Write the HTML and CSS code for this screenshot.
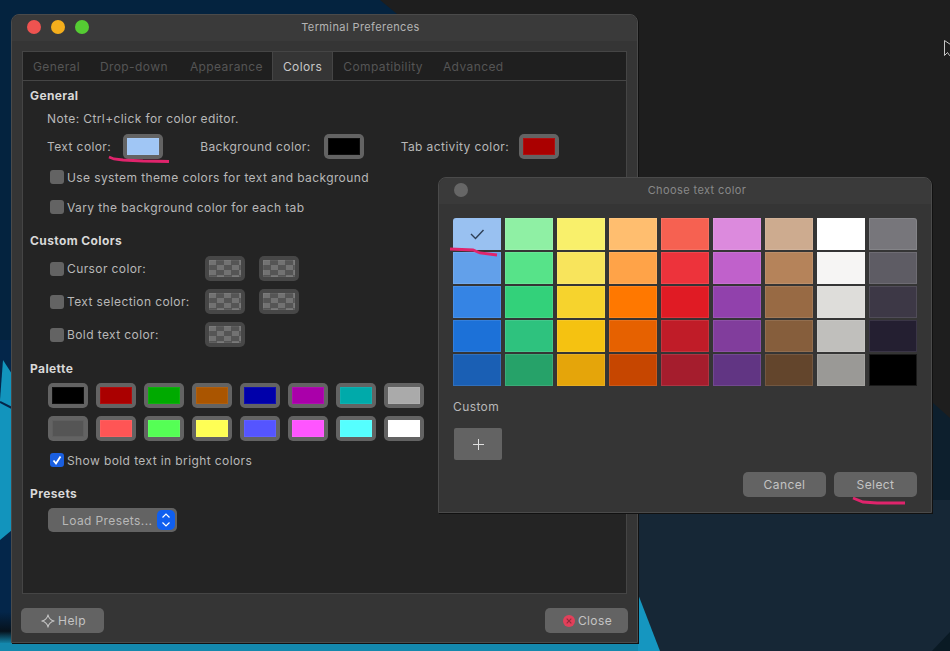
FILE: index.html
```html
<!DOCTYPE html>
<html lang="en">
<head>
  <meta charset="UTF-8">
  <title>Terminal Preferences</title>
  <link rel="stylesheet" href="styles.css">
</head>
<body>

  <svg class="wallpaper" width="950" height="651" viewBox="0 0 950 651">
    <defs>
      <linearGradient id="shade" x1="0" y1="0" x2="0" y2="1">
        <stop offset="0" stop-color="#04264a"/>
        <stop offset="0.6" stop-color="#06121c"/>
        <stop offset="1" stop-color="#1488ad"/>
      </linearGradient>
    </defs>
    <rect width="950" height="651" fill="#1e1e1e"/>
    <polygon points="0,0 380,0 397,14 440,60 440,400 0,400" fill="#04233f"/>
    <rect x="0" y="340" width="12" height="311" fill="#04264a"/>
    <polygon points="3,360 12,374 12,530 0,540 0,400" fill="#1294bd"/>
    <path d="M0 402l12 6" stroke="#04264a" stroke-width="2"/>
    <rect x="0" y="612" width="12" height="32" fill="url(#shade)"/>
    <polygon points="932,402 950,418 950,520 932,520" fill="#0d1f2d"/>
    <polygon points="600,500 950,500 950,651 660,651 638,595" fill="#162736"/>
    <rect x="0" y="643" width="640" height="8" fill="#1488ad"/>
    <polygon points="638,594 660,651 638,651" fill="#1596c0"/>
    <polygon points="932,651 950,632 950,651" fill="#0a1a24"/>
    <path d="M944.500 40.500v15l3-3 2 3h1v-11z" fill="#1e1e1e" stroke="#c8c8c8"/>
  </svg>

  <div class="window prefs">
    <div class="titlebar">
      <div class="lights">
        <span class="light red"></span>
        <span class="light yellow"></span>
        <span class="light green"></span>
      </div>
      <div class="title">Terminal Preferences</div>
    </div>

    <div class="notebook">
      <div class="tabs">
        <div class="tab">General</div>
        <div class="tab">Drop-down</div>
        <div class="tab">Appearance</div>
        <div class="tab active">Colors</div>
        <div class="tab">Compatibility</div>
        <div class="tab">Advanced</div>
      </div>

      <div class="page">
        <h3>General</h3>
        <div class="indent">
          <p class="note">Note: Ctrl+click for color editor.</p>
          <div class="general-row">
            <span class="general-label">Text color:</span>
            <span class="swatch"><i style="background:#a0c6f5"></i></span>
            <span class="general-label bg-label">Background color:</span>
            <span class="swatch"><i style="background:#000"></i></span>
            <span class="general-label tab-label">Tab activity color:</span>
            <span class="swatch"><i style="background:#aa0000"></i></span>
          </div>
          <label class="check first"><span class="box"></span>Use system theme colors for text and background</label>
          <label class="check"><span class="box"></span>Vary the background color for each tab</label>
        </div>

        <h3 class="custom-head">Custom Colors</h3>
        <div class="indent custom-grid">
          <label class="check"><span class="box"></span>Cursor color:</label>
          <span class="swatch empty"><i></i></span>
          <span class="swatch empty"><i></i></span>
          <label class="check"><span class="box"></span>Text selection color:</label>
          <span class="swatch empty"><i></i></span>
          <span class="swatch empty"><i></i></span>
          <label class="check"><span class="box"></span>Bold text color:</label>
          <span class="swatch empty"><i></i></span>
        </div>

        <h3 class="palette-head">Palette</h3>
        <div class="indent">
          <div class="palette">
            <span class="swatch"><i style="background:#000"></i></span>
            <span class="swatch"><i style="background:#aa0000"></i></span>
            <span class="swatch"><i style="background:#00aa00"></i></span>
            <span class="swatch"><i style="background:#aa5500"></i></span>
            <span class="swatch"><i style="background:#0000aa"></i></span>
            <span class="swatch"><i style="background:#aa00aa"></i></span>
            <span class="swatch"><i style="background:#00aaaa"></i></span>
            <span class="swatch"><i style="background:#aaaaaa"></i></span>
            <span class="swatch"><i style="background:#555555"></i></span>
            <span class="swatch"><i style="background:#ff5555"></i></span>
            <span class="swatch"><i style="background:#55ff55"></i></span>
            <span class="swatch"><i style="background:#ffff55"></i></span>
            <span class="swatch"><i style="background:#5555ff"></i></span>
            <span class="swatch"><i style="background:#ff55ff"></i></span>
            <span class="swatch"><i style="background:#55ffff"></i></span>
            <span class="swatch"><i style="background:#ffffff"></i></span>
          </div>
          <label class="check bold-check">
            <span class="box on">
              <svg width="14" height="14" viewBox="0 0 14 14"><path d="M3.500 7.500l2.500 3 4.500-7" fill="none" stroke="#fff" stroke-width="1.800"/></svg>
            </span>Show bold text in bright colors
          </label>
        </div>

        <h3 class="presets-head">Presets</h3>
        <div class="indent">
          <div class="combo">
            <span class="combo-text">Load Presets...</span>
            <span class="combo-arrows">
              <svg width="10" height="16" viewBox="0 0 10 16"><path d="M1.500 5.500l3.500-3.500 3.500 3.500M1.500 10.500l3.500 3.500 3.500-3.500" fill="none" stroke="#fff" stroke-width="1.200"/></svg>
            </span>
          </div>
        </div>
      </div>
    </div>

    <div class="actions">
      <button class="btn">
        <svg width="14" height="14" viewBox="0 0 16 16"><path d="M8 1c.8 3.800 3.200 6.200 7 7-3.800.8-6.200 3.200-7 7-.8-3.800-3.200-6.200-7-7 3.800-.8 6.200-3.200 7-7z" fill="none" stroke="#c4c4c4" stroke-width="1.200" stroke-linejoin="round"/></svg>
        Help
      </button>
      <button class="btn">
        <svg width="12" height="12" viewBox="0 0 13 13"><circle cx="6.500" cy="6.500" r="6.500" fill="#e2405a"/><path d="M4 4l5 5M9 4l-5 5" stroke="#8f2a3d" stroke-width="1.200"/></svg>
        Close
      </button>
    </div>
  </div>

  <div class="window chooser">
    <div class="titlebar">
      <div class="lights"><span class="light gray"></span></div>
      <div class="title dim">Choose text color</div>
    </div>
    <div class="chooser-body">
      <div class="colors">
        <span class="color selected" style="background:#99c1f1">
          <svg width="16" height="12" viewBox="0 0 16 12"><path d="M2 6l4.500 4.500 8-8.500" fill="none" stroke="#2e3f55" stroke-width="1.400"/></svg>
        </span>
        <span class="color" style="background:#8ff0a4"></span>
        <span class="color" style="background:#f9f06b"></span>
        <span class="color" style="background:#ffbe6f"></span>
        <span class="color" style="background:#f66151"></span>
        <span class="color" style="background:#dc8add"></span>
        <span class="color" style="background:#cdab8f"></span>
        <span class="color" style="background:#ffffff"></span>
        <span class="color" style="background:#77767b"></span>

        <span class="color" style="background:#62a0ea"></span>
        <span class="color" style="background:#57e389"></span>
        <span class="color" style="background:#f8e45c"></span>
        <span class="color" style="background:#ffa348"></span>
        <span class="color" style="background:#ed333b"></span>
        <span class="color" style="background:#c061cb"></span>
        <span class="color" style="background:#b5835a"></span>
        <span class="color" style="background:#f6f5f4"></span>
        <span class="color" style="background:#5e5c64"></span>

        <span class="color" style="background:#3584e4"></span>
        <span class="color" style="background:#33d17a"></span>
        <span class="color" style="background:#f6d32d"></span>
        <span class="color" style="background:#ff7800"></span>
        <span class="color" style="background:#e01b24"></span>
        <span class="color" style="background:#9141ac"></span>
        <span class="color" style="background:#986a44"></span>
        <span class="color" style="background:#deddda"></span>
        <span class="color" style="background:#3d3846"></span>

        <span class="color" style="background:#1c71d8"></span>
        <span class="color" style="background:#2ec27e"></span>
        <span class="color" style="background:#f5c211"></span>
        <span class="color" style="background:#e66100"></span>
        <span class="color" style="background:#c01c28"></span>
        <span class="color" style="background:#813d9c"></span>
        <span class="color" style="background:#865e3c"></span>
        <span class="color" style="background:#c0bfbc"></span>
        <span class="color" style="background:#241f31"></span>

        <span class="color" style="background:#1a5fb4"></span>
        <span class="color" style="background:#26a269"></span>
        <span class="color" style="background:#e5a50a"></span>
        <span class="color" style="background:#c64600"></span>
        <span class="color" style="background:#a51d2d"></span>
        <span class="color" style="background:#613583"></span>
        <span class="color" style="background:#63452c"></span>
        <span class="color" style="background:#9a9996"></span>
        <span class="color" style="background:#000000"></span>
      </div>
      <div class="custom-label">Custom</div>
      <button class="add">
        <svg width="13" height="13" viewBox="0 0 13 13"><path d="M6.500 1v11M1 6.500h11" stroke="#e0e0e0" stroke-width="1"/></svg>
      </button>
      <div class="chooser-actions">
        <button class="btn">Cancel</button>
        <button class="btn">Select</button>
      </div>
    </div>
  </div>

  <!-- marker scribbles drawn over the screenshot -->
  <svg class="scribbles" width="950" height="651" viewBox="0 0 950 651">
    <g fill="none" stroke="#e0246c" stroke-width="2.800">
      <path d="M109 157l5 2 9 1 20 1 26 .5"/>
      <path d="M450 249l23 1 7 3 17 2"/>
      <path d="M853 498l10 4 14 1 28 0"/>
    </g>
  </svg>

</body>
</html>
```

FILE: styles.css
```css
* {
  box-sizing: border-box;
}
body {
  margin: 0;
  width: 950px;
  height: 651px;
  overflow: hidden;
  position: relative;
  background-color: #1e1e1e;
  font-family: Inter, "Noto Sans", sans-serif;
  font-size: 12px;
  letter-spacing: 0.4px;
  color: #b8b8b8;
}
.wallpaper, .scribbles {
  position: absolute;
  left: 0;
  top: 0;
}
.scribbles {
  pointer-events: none;
}

/* windows */
.window {
  position: absolute;
  display: flex;
  flex-direction: column;
  background-color: #353535;
  border: 1px solid #4a4a4a;
  border-radius: 8px 8px 0 0;
  box-shadow: 1px 1px 0 #111;
}
.prefs {
  left: 11px;
  top: 14px;
  width: 627px;
  height: 629px;
}
.chooser {
  left: 438px;
  top: 177px;
  width: 494px;
  height: 336px;
}
.titlebar {
  height: 26px;
  padding-bottom: 2px;
  display: flex;
  align-items: center;
  position: relative;
  background-color: #3a3a3a;
  border-radius: 8px 8px 0 0;
}
.lights {
  display: flex;
  gap: 10px;
  padding-left: 15px;
}
.light {
  width: 14px;
  height: 14px;
  border-radius: 50%;
}
.red { background-color: #ee5350; }
.yellow { background-color: #f4ae1c; }
.green { background-color: #55cc33; }
.gray { background-color: #666; }
.title {
  position: absolute;
  left: 0;
  right: 0;
  padding-left: 72px;
  text-align: center;
  font-size: 11px;
  color: #b4b4b4;
}
.title.dim {
  padding-left: 24px;
  color: #888;
}

/* preferences */
.notebook {
  margin: 10px 10px 0;
  height: 543px;
  background-color: #242424;
  border: 1px solid #454545;
}
.tabs {
  display: flex;
  height: 29px;
  background-color: #1f1f1f;
  border-bottom: 1px solid #454545;
}
.tab {
  display: flex;
  align-items: center;
  padding: 0 10px;
  color: #555;
}
.tab:nth-child(3) {
  padding: 0 9px 0 12px;
}
.tab.active {
  background-color: #353535;
  border-left: 1px solid #454545;
  border-right: 1px solid #454545;
  color: #c8c8c8;
}
.page {
  padding: 7px 7px;
}
h3 {
  margin: 0;
  font-size: 12px;
  line-height: 15px;
  font-weight: 700;
  color: #d8d8d8;
}
.indent {
  padding-left: 17px;
}
.note {
  margin: 0;
  padding-top: 8px;
  line-height: 15px;
}
.general-row {
  display: flex;
  align-items: center;
  margin-top: 8px;
}
.general-label {
  line-height: 25px;
}
.general-row .swatch {
  margin-left: 13px;
}
.general-row .swatch:nth-child(2) {
  margin-left: 12px;
}
.general-row .tab-label + .swatch {
  margin-left: 10px;
}
.bg-label, .tab-label {
  margin-left: 37px;
}
.swatch {
  display: block;
  flex: none;
  width: 40px;
  height: 25px;
  padding: 4px;
  border-radius: 5px;
  background-color: #636363;
}
.swatch i {
  display: block;
  width: 100%;
  height: 100%;
  box-shadow: inset 0 0 0 1px rgba(255,255,255,0.06);
}
.swatch.empty {
  background-color: #474747;
}
.swatch.empty i {
  background-color: #6a6a6a;
  background-image: conic-gradient(#555 25%, #727272 0 50%, #555 0 75%, #727272 0);
  background-size: 15px 10px;
}
.check {
  display: flex;
  align-items: center;
  gap: 3px;
  height: 30px;
  padding-left: 3px;
}
.check.first {
  margin-top: 3px;
}
.box {
  flex: none;
  width: 14px;
  height: 14px;
  border-radius: 3px;
  background-color: #636363;
}
.box.on {
  background-color: #1a5fe0;
}
.box svg {
  display: block;
}
.custom-head {
  margin-top: 11px;
}
.custom-grid {
  display: grid;
  grid-template-columns: 144px 40px 40px;
  column-gap: 14px;
  row-gap: 8px;
  margin-top: 8px;
  width: 300px;
}
.custom-grid .check {
  height: 25px;
}
.palette-head {
  margin-top: 14px;
}
.palette {
  display: grid;
  grid-template-columns: repeat(8, 40px);
  gap: 8px;
  margin: 7px 0 0 1px;
}
.bold-check {
  margin-top: 4px;
}
.presets-head {
  margin-top: 11px;
}
.combo {
  display: flex;
  align-items: center;
  justify-content: space-between;
  width: 129px;
  height: 24px;
  margin: 7px 0 0 1px;
  padding: 2px;
  border-radius: 5px;
  background-color: #636363;
}
.combo-text {
  padding-left: 12px;
}
.combo-arrows {
  display: flex;
  align-items: center;
  justify-content: center;
  width: 18px;
  height: 20px;
  border-radius: 5px;
  background-color: #0f5ff0;
}
.actions {
  display: flex;
  justify-content: space-between;
  padding: 14px 9px 0;
}
.btn {
  display: flex;
  align-items: center;
  justify-content: center;
  gap: 3px;
  width: 83px;
  height: 25px;
  padding: 0;
  border: 0;
  border-radius: 5px;
  background-color: #636363;
  font: inherit;
  letter-spacing: inherit;
  color: #c4c4c4;
}
.actions .btn {
  padding-left: 2px;
}

/* color chooser */
.chooser-body {
  padding: 14px 14px 0;
}
.colors {
  display: grid;
  grid-template-columns: repeat(9, 48px);
  grid-auto-rows: 32px;
  column-gap: 4px;
  row-gap: 2px;
}
.color {
  display: flex;
  align-items: center;
  justify-content: center;
  box-shadow: inset 0 0 0 1px rgba(255,255,255,0.1);
}
.color:nth-child(1) { border-top-left-radius: 3px; }
.color:nth-child(9) { border-top-right-radius: 3px; }
.color.selected {
  box-shadow: none;
}
.custom-label {
  margin-top: 13px;
  line-height: 15px;
}
.add {
  display: flex;
  align-items: center;
  justify-content: center;
  width: 48px;
  height: 32px;
  margin: 14px 0 0 1px;
  padding: 0;
  border: 0;
  border-radius: 2px;
  background-color: #636363;
}
.chooser-actions {
  display: flex;
  justify-content: flex-end;
  gap: 8px;
  margin-top: 12px;
}
```
